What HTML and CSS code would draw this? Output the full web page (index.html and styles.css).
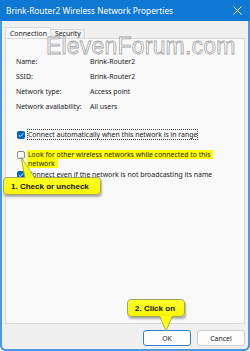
FILE: index.html
```html
<!DOCTYPE html>
<html lang="en">
<head>
  <meta charset="UTF-8">
  <title>Brink-Router2 Wireless Network Properties</title>
  <meta name="viewport" content="width=device-width, initial-scale=1.0">
  <link rel="stylesheet" href="styles.css">
</head>
<body>

  <div class="window">
    <!-- Title bar -->
    <div class="titlebar">
      <span class="title">Brink-Router2 Wireless Network Properties</span>
      <svg class="close" width="9" height="9" viewBox="0 0 9 9">
        <path d="M0.5 0.5 L8.5 8.5 M8.5 0.5 L0.5 8.5" stroke="#fff" stroke-width="1"/>
      </svg>
    </div>

    <!-- Tabs -->
    <div class="tabs">
      <div class="tab active">Connection</div>
      <div class="tab">Security</div>
    </div>

    <!-- Tab page -->
    <div class="panel">
      <div class="watermark">ElevenForum.com</div>

      <div class="info">
        <div class="row"><span class="label">Name:</span><span>Brink-Router2</span></div>
        <div class="row"><span class="label">SSID:</span><span>Brink-Router2</span></div>
        <div class="row"><span class="label">Network type:</span><span>Access point</span></div>
        <div class="row"><span class="label">Network availability:</span><span>All users</span></div>
      </div>

      <div class="options">
        <div class="opt">
          <span class="box checked">
            <svg width="8" height="8" viewBox="0 0 8 8"><path d="M1.8 4.2 L3.3 5.6 L6.2 2.5" fill="none" stroke="#fff" stroke-width="0.9"/></svg>
          </span>
          <span class="text"><span class="focus">Connect automatically when this network is in range</span></span>
        </div>
        <div class="opt">
          <span class="box"></span>
          <span class="text"><span class="mark">Look for other wireless networks while connected to this network</span></span>
        </div>
        <div class="opt">
          <span class="box checked">
            <svg width="8" height="8" viewBox="0 0 8 8"><path d="M1.8 4.2 L3.3 5.6 L6.2 2.5" fill="none" stroke="#fff" stroke-width="0.9"/></svg>
          </span>
          <span class="text">Connect even if the network is not broadcasting its name</span>
        </div>
      </div>
    </div>

    <!-- Buttons -->
    <div class="footer">
      <button class="btn default">OK</button>
      <button class="btn">Cancel</button>
    </div>

    <!-- Callouts -->
    <svg class="pointer pointer-1" width="20" height="24" viewBox="0 0 20 24">
      <polygon points="1,1 5,23 15,23" fill="#ffff00"/>
      <polyline points="5,22 1,1 15,22" fill="none" stroke="#9a9a5a" stroke-width="0.8"/>
    </svg>
    <div class="callout callout-1">1. Check or uncheck</div>

    <svg class="pointer pointer-2" width="16" height="16" viewBox="0 0 16 16">
      <polygon points="2,0 14,0 8,15" fill="#ffff00"/>
      <polyline points="2,1 8,15 14,1" fill="none" stroke="#9a9a5a" stroke-width="0.8"/>
    </svg>
    <div class="callout callout-2">2. Click on</div>
  </div>

</body>
</html>
```

FILE: styles.css
```css
* {
  box-sizing: border-box;
}
body {
  margin: 0;
  background: #ffffff;
  font-family: 'Noto Sans', 'DejaVu Sans', sans-serif;
  color: #1b1b1b;
}
.window {
  position: relative;
  width: 250px;
  height: 351px;
  background: #f0f0f0;
  border-radius: 0 0 6px 6px;
  box-shadow: inset 2px 0 #4a9ae2, inset -2px 0 #4a9ae2, inset 0 -2px #4a9ae2;
  display: flex;
  flex-direction: column;
  overflow: hidden;
}
.titlebar {
  height: 21px;
  background: #0f78d4;
  color: white;
  display: flex;
  align-items: center;
  justify-content: space-between;
  padding: 0 8px 0 6px;
  font-size: 8.3px;
}
.close {
  display: block;
}
.tabs {
  display: flex;
  align-items: flex-end;
  height: 17px;
  padding: 0 5px;
  font-size: 6.9px;
}
.tab {
  height: 9px;
  line-height: 8px;
  padding: 0 3px 0 4px;
  border: 1px solid #dadada;
  border-bottom: none;
  border-left: none;
  background: #f0f0f0;
}
.tab.active {
  height: 12px;
  line-height: 11px;
  padding: 0 3px 0 4px;
  border-left: 1px solid #dadada;
  background: #f9f9f9;
  position: relative;
  top: 1px;
}
.panel {
  position: relative;
  height: 286px;
  margin: 0 5px;
  background: #f9f9f9;
  border: 1px solid #dadada;
  padding: 15px 10px 0 10px;
  font-size: 6.9px;
}
.watermark {
  position: absolute;
  left: 40px;
  top: -6px;
  font-family: 'Liberation Sans', Arial, sans-serif;
  font-size: 23px;
  color: rgba(255, 255, 255, 0.8);
  -webkit-text-stroke: 0.8px rgba(120, 120, 120, 0.7);
  letter-spacing: 0.2px;
}
.row {
  display: flex;
  height: 15px;
  line-height: 15px;
}
.label {
  width: 74px;
}
.options {
  margin-top: 16px;
  padding-left: 1px;
}
.opt {
  display: flex;
  height: 20px;
  line-height: 9px;
}
.box {
  width: 8px;
  height: 8px;
  margin-top: 0.5px;
  margin-right: 3px;
  flex: none;
  border: 1px solid #8a8a8a;
  border-radius: 2px;
  background: #ffffff;
}
.box.checked {
  border: none;
  background: #0067c0;
}
.box svg {
  display: block;
}
.text {
  width: 196px;
}
.focus {
  outline: 1px dotted #444;
}
.mark {
  background: #ffff00;
  padding: 0 3px 0 1px;
  margin-left: -1px;
  -webkit-box-decoration-break: clone;
  box-decoration-break: clone;
}
.footer {
  display: flex;
  justify-content: flex-end;
  gap: 6px;
  padding: 6px 5px 0 0;
}
.btn {
  width: 48px;
  height: 16px;
  padding: 0;
  font-family: 'Noto Sans', 'DejaVu Sans', sans-serif;
  font-size: 6.9px;
  color: #1b1b1b;
  background: #fdfdfd;
  border: 1px solid #d0d0d0;
  border-radius: 3px;
}
.btn.default {
  border: 1px solid #2f7fd0;
  box-shadow: inset 0 0 0 1px #ffffff;
}
.callout {
  position: absolute;
  height: 18px;
  line-height: 17px;
  padding: 0 7px;
  background: linear-gradient(#ffff2a, #f6f600);
  border: 1px solid #a5a560;
  border-radius: 4px;
  box-shadow: 1px 2px 2px rgba(0, 0, 0, 0.3);
  font-family: 'Liberation Sans', Arial, sans-serif;
  font-weight: bold;
  font-size: 8px;
  color: #111;
  white-space: nowrap;
}
.callout-1 {
  left: 3px;
  top: 177px;
  width: 98px;
}
.callout-2 {
  left: 127px;
  top: 299px;
  width: 58px;
}
.pointer {
  position: absolute;
  z-index: 2;
}
.pointer-1 {
  left: 20px;
  top: 156px;
}
.pointer-2 {
  left: 158px;
  top: 316px;
}
```
